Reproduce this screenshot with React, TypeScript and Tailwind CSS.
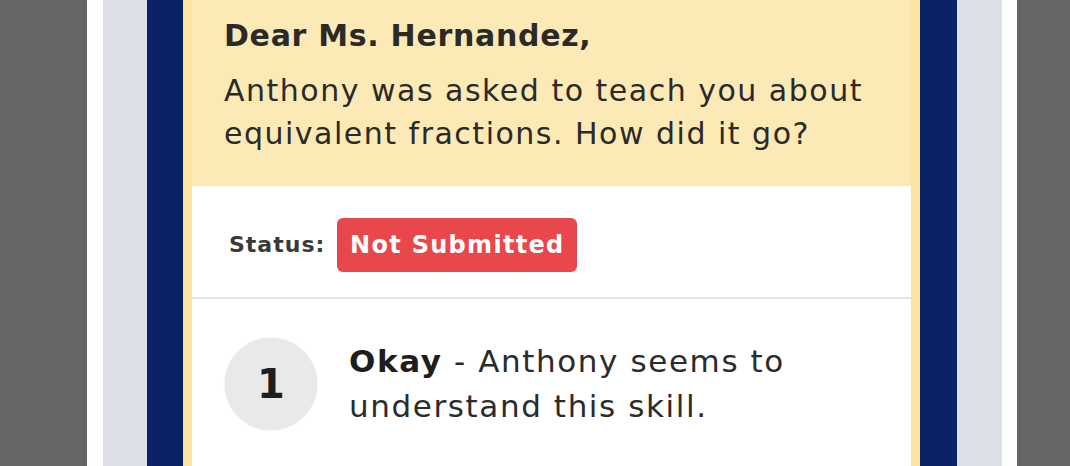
export default function App() {
  return (
    <main className="h-[466px] w-[1070px] overflow-hidden bg-[#666666] pl-[87px] font-['DejaVu_Sans',_sans-serif]">
      {/* device frame */}
      <div className="h-full w-[930px] bg-[#fdfdfd] pl-[16px] pr-[15px]">
        <div className="h-full bg-[#dcdee8] pl-[44px] pr-[45px]">
          <div className="h-full bg-[#0b2266] pl-[36px] pr-[37px]">
            {/* card */}
            <div className="flex h-full flex-col border-x-[9px] border-[#fbe3a2] bg-white">
              {/* letter */}
              <div className="h-[186px] bg-[#fbe9b6] pl-[32px] pt-[14px] text-[30px] leading-[43px] tracking-[1.5px] text-[#2b2a26]">
                <p className="font-bold tracking-[0.7px]">Dear Ms. Hernandez,</p>
                <p className="mt-[12px]">
                  Anthony was asked to teach you about
                  <br />
                  equivalent fractions. How did it go?
                </p>
              </div>

              {/* status */}
              <div className="flex h-[113px] items-center border-b-2 border-[#e4e4e4] pl-[37px] pt-[6px]">
                <span className="text-[22px] font-bold tracking-[1px] text-[#3a3a3a]">Status:</span>
                <span className="ml-[12px] flex h-[54px] w-[240px] items-center justify-center rounded-[6px] bg-[#e8474c] text-[24px] font-bold tracking-[1.3px] text-white">
                  Not Submitted
                </span>
              </div>

              {/* answer */}
              <div className="flex items-center gap-[32px] pl-[33px] pt-[39px]">
                <div className="flex size-[92px] shrink-0 items-center justify-center rounded-full bg-[#e9e9e9] text-[40px] font-bold text-[#1e1e1e] shadow-[0_0_2px_rgba(0,0,0,0.15)]">
                  1
                </div>
                <p className="text-[31px] leading-[45px] tracking-[1.6px] text-[#2b2b2b]">
                  <span className="font-bold text-[#1e1e1e]">Okay</span> - Anthony seems to
                  <br />
                  understand this skill.
                </p>
              </div>
            </div>
          </div>
        </div>
      </div>
    </main>
  );
}
